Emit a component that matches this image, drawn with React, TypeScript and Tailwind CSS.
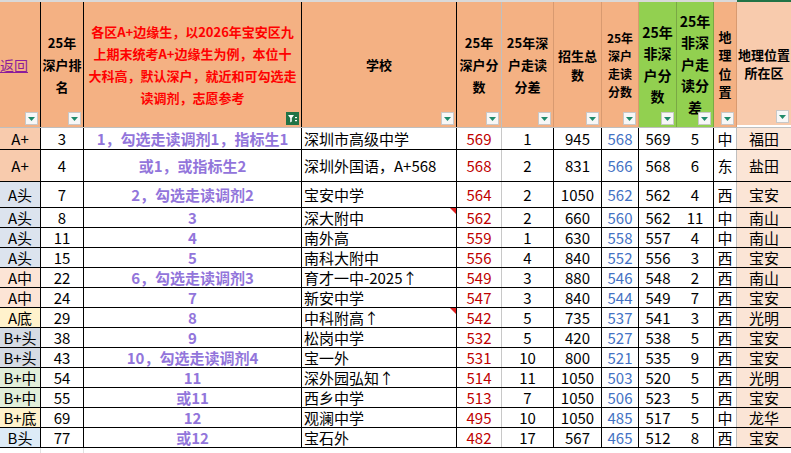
type RowData = {
  grade: string;
  gradeBg: string;
  rank: number;
  note: string;
  school: string;
  score: number;
  diff: number;
  total: number;
  walk: number;
  nonScore: number;
  nonDiff: number;
  loc: string;
  district: string;
  height: string;
  mark?: boolean;
};

const rows: RowData[] = [
  { grade: "A+", gradeBg: "bg-[#F8CBAD]", rank: 3, note: "1，勾选走读调剂1，指标生1", school: "深圳市高级中学", score: 569, diff: 1, total: 945, walk: 568, nonScore: 569, nonDiff: 5, loc: "中", district: "福田", height: "h-[22px]" },
  { grade: "A+", gradeBg: "bg-[#F8CBAD]", rank: 4, note: "或1，或指标生2", school: "深圳外国语，A+568", score: 568, diff: 2, total: 831, walk: 566, nonScore: 568, nonDiff: 6, loc: "东", district: "盐田", height: "h-[32px]" },
  { grade: "A头", gradeBg: "bg-[#DCE3EE]", rank: 7, note: "2，勾选走读调剂2", school: "宝安中学", score: 564, diff: 2, total: 1050, walk: 562, nonScore: 562, nonDiff: 4, loc: "西", district: "宝安", height: "h-[26px]" },
  { grade: "A头", gradeBg: "bg-[#DCE3EE]", rank: 8, note: "3", school: "深大附中", score: 562, diff: 2, total: 660, walk: 560, nonScore: 562, nonDiff: 11, loc: "中", district: "南山", height: "h-[20px]", mark: true },
  { grade: "A头", gradeBg: "bg-[#DCE3EE]", rank: 11, note: "4", school: "南外高", score: 559, diff: 1, total: 630, walk: 558, nonScore: 557, nonDiff: 4, loc: "中", district: "南山", height: "h-[20px]" },
  { grade: "A头", gradeBg: "bg-[#DCE3EE]", rank: 15, note: "5", school: "南科大附中", score: 556, diff: 4, total: 840, walk: 552, nonScore: 556, nonDiff: 3, loc: "西", district: "宝安", height: "h-[20px]" },
  { grade: "A中", gradeBg: "bg-[#FCE4D6]", rank: 22, note: "6，勾选走读调剂3", school: "育才一中-2025↑", score: 549, diff: 3, total: 880, walk: 546, nonScore: 548, nonDiff: 2, loc: "西", district: "南山", height: "h-[20px]" },
  { grade: "A中", gradeBg: "bg-[#FCE4D6]", rank: 24, note: "7", school: "新安中学", score: 547, diff: 3, total: 840, walk: 544, nonScore: 549, nonDiff: 7, loc: "西", district: "宝安", height: "h-[20px]" },
  { grade: "A底", gradeBg: "bg-[#FFF2CC]", rank: 29, note: "8", school: "中科附高↑", score: 542, diff: 5, total: 735, walk: 537, nonScore: 541, nonDiff: 3, loc: "西", district: "光明", height: "h-[20px]", mark: true },
  { grade: "B+头", gradeBg: "bg-[#D6DCE4]", rank: 38, note: "9", school: "松岗中学", score: 532, diff: 5, total: 420, walk: 527, nonScore: 538, nonDiff: 5, loc: "西", district: "宝安", height: "h-[20px]" },
  { grade: "B+头", gradeBg: "bg-[#D6DCE4]", rank: 43, note: "10，勾选走读调剂4", school: "宝一外", score: 531, diff: 10, total: 800, walk: 521, nonScore: 535, nonDiff: 9, loc: "西", district: "宝安", height: "h-[20px]" },
  { grade: "B+中", gradeBg: "bg-[#E2EFDA]", rank: 54, note: "11", school: "深外园弘知↑", score: 514, diff: 11, total: 1050, walk: 503, nonScore: 520, nonDiff: 5, loc: "西", district: "光明", height: "h-[20px]" },
  { grade: "B+中", gradeBg: "bg-[#E2EFDA]", rank: 55, note: "或11", school: "西乡中学", score: 513, diff: 7, total: 1050, walk: 506, nonScore: 523, nonDiff: 5, loc: "西", district: "宝安", height: "h-[20px]" },
  { grade: "B+底", gradeBg: "bg-[#FFF2CC]", rank: 69, note: "12", school: "观澜中学", score: 495, diff: 10, total: 1050, walk: 485, nonScore: 517, nonDiff: 5, loc: "中", district: "龙华", height: "h-[20px]" },
  { grade: "B头", gradeBg: "bg-[#DDEBF7]", rank: 77, note: "或12", school: "宝石外", score: 482, diff: 17, total: 567, walk: 465, nonScore: 512, nonDiff: 8, loc: "西", district: "宝安", height: "h-[20px]" },
];

const FilterButton = ({ active = false }: { active?: boolean }): JSX.Element => {
  if (active) {
    return (
      <div className="absolute right-[2px] bottom-[2px] w-[13px] h-[13px] bg-[#217346] flex items-center justify-center">
        <svg width="11" height="11" viewBox="0 0 11 11">
          <path d="M1 2h6L4.8 5v3.5L3.2 9.5V5z" fill="#fff" />
          <rect x="8" y="4" width="2" height="1.2" fill="#fff" />
          <rect x="8" y="7" width="2" height="1.2" fill="#fff" />
        </svg>
      </div>
    );
  }
  return (
    <div className="absolute right-[2px] bottom-[2px] w-[13px] h-[13px] bg-[#f7f7f7] border border-[#c8c8c8] flex items-center justify-center">
      <svg width="7" height="4" viewBox="0 0 7 4">
        <path d="M0 0h7L3.5 4z" fill="#1f8a6a" />
      </svg>
    </div>
  );
};

const HeaderCell = ({
  width,
  bg,
  border,
  children,
  active,
}: {
  width: string;
  bg: string;
  border: string;
  children?: React.ReactNode;
  active?: boolean;
}): JSX.Element => {
  return (
    <div className={`relative h-full flex items-center justify-center text-center border-r ${width} ${bg} ${border}`}>
      {children}
      <FilterButton active={active} />
    </div>
  );
};

const DataRow = ({ row }: { row: RowData }): JSX.Element => {
  return (
    <div className={`flex border-b border-black text-[15px] text-black ${row.height}`}>
      <div className={`w-[41px] flex items-center justify-center border-r border-black ${row.gradeBg}`}>{row.grade}</div>
      <div className="w-[43px] flex items-center justify-center border-r border-black">{row.rank}</div>
      <div className="w-[218px] flex items-center justify-center border-r border-black font-bold text-[#9275DB] whitespace-nowrap">{row.note}</div>
      <div className="relative w-[155px] flex items-center pl-[2px] border-r border-black whitespace-nowrap">
        {row.school}
        {row.mark && (
          <div className="absolute top-0 right-0 w-0 h-0 border-l-[6px] border-l-transparent border-t-[6px] border-t-[#e02020]" />
        )}
      </div>
      <div className="w-[45px] flex items-center justify-center border-r border-[#c8c8c8] text-[#C00000]">{row.score}</div>
      <div className="w-[52px] flex items-center justify-center border-r border-black">{row.diff}</div>
      <div className="w-[48px] flex items-center justify-center border-r border-black">{row.total}</div>
      <div className="w-[37px] flex items-center justify-center border-r border-black text-[#4472C4]">{row.walk}</div>
      <div className="w-[38px] flex items-center justify-center">{row.nonScore}</div>
      <div className="w-[37px] flex items-center justify-center border-r border-black">{row.nonDiff}</div>
      <div className="w-[23px] flex items-center justify-center border-r border-[#bfbfbf]">{row.loc}</div>
      <div className="w-[54px] flex items-center justify-center bg-[#FBE5D6]">{row.district}</div>
    </div>
  );
};

export default function App() {
  return (
    <main className="w-[791px] h-[453px] overflow-hidden bg-white font-['Noto_Sans_CJK_SC','Liberation_Sans',sans-serif] leading-none">
      <div className="flex h-[128px] border-t-2 border-t-[#d9d9d9] border-b border-b-[#bfbfbf] text-[13px] font-bold text-black">
        <HeaderCell width="w-[41px]" bg="bg-[#F4B183]" border="border-black">
          <span className="absolute left-0 top-[54px] text-[14px] font-normal text-[#8B1C9C] underline leading-[18px]">返回</span>
        </HeaderCell>
        <HeaderCell width="w-[43px]" bg="bg-[#F4B183]" border="border-black">
          <div className="leading-[22px]">25年<br />深户排<br />名</div>
        </HeaderCell>
        <HeaderCell width="w-[218px]" bg="bg-[#F4B183]" border="border-black" active>
          <div className="leading-[22px] text-[13px] text-[#FF0000] whitespace-nowrap">
            各区A+边缘生，以2026年宝安区九<br />
            上期末统考A+边缘生为例，本位十<br />
            大科高，默认深户，就近和可勾选走<br />
            读调剂，志愿参考
          </div>
        </HeaderCell>
        <HeaderCell width="w-[155px]" bg="bg-[#F4B183]" border="border-black">
          <div>学校</div>
        </HeaderCell>
        <HeaderCell width="w-[45px]" bg="bg-[#F4B183]" border="border-[#bfbfbf]">
          <div className="leading-[22px]">25年<br />深户分<br />数</div>
        </HeaderCell>
        <HeaderCell width="w-[52px]" bg="bg-[#F4B183]" border="border-[#d89a70]">
          <div className="leading-[22px] whitespace-nowrap">25年深<br />户走读<br />分差</div>
        </HeaderCell>
        <HeaderCell width="w-[48px]" bg="bg-[#F4B183]" border="border-[#d89a70]">
          <div className="leading-[19px]">招生总<br />数</div>
        </HeaderCell>
        <HeaderCell width="w-[37px]" bg="bg-[#F4B183]" border="border-[#d89a70]">
          <div className="leading-[18px] text-[12px]">25年<br />深户<br />走读<br />分数</div>
        </HeaderCell>
        <HeaderCell width="w-[38px]" bg="bg-[#92D050]" border="border-[#7aa845]">
          <div className="leading-[21.5px] text-[14px]">25年<br />非深<br />户分<br />数</div>
        </HeaderCell>
        <HeaderCell width="w-[37px]" bg="bg-[#92D050]" border="border-[#7aa845]">
          <div className="leading-[21.5px] text-[14px]">25年<br />非深<br />户走<br />读分<br />差</div>
        </HeaderCell>
        <HeaderCell width="w-[23px]" bg="bg-[#F4B183]" border="border-[#d89a70]">
          <div className="leading-[18.5px]">地<br />理<br />位<br />置</div>
        </HeaderCell>
        <div className="relative w-[54px] h-full flex items-center justify-center text-center bg-[#F8CBAD] border-t-2 border-t-[#217346] -mt-[2px]">
          <div className="leading-[18px] whitespace-nowrap">地理位置<br />所在区</div>
          <FilterButton />
        </div>
      </div>
      {rows.map((row, index) => (
        <DataRow row={row} key={index} />
      ))}
      <div className="flex h-[5px]">
        <div className="w-[41px] border-r border-[#e0e0e0]" />
        <div className="w-[43px] border-r border-[#e0e0e0]" />
        <div className="w-[218px]" />
      </div>
    </main>
  );
}
